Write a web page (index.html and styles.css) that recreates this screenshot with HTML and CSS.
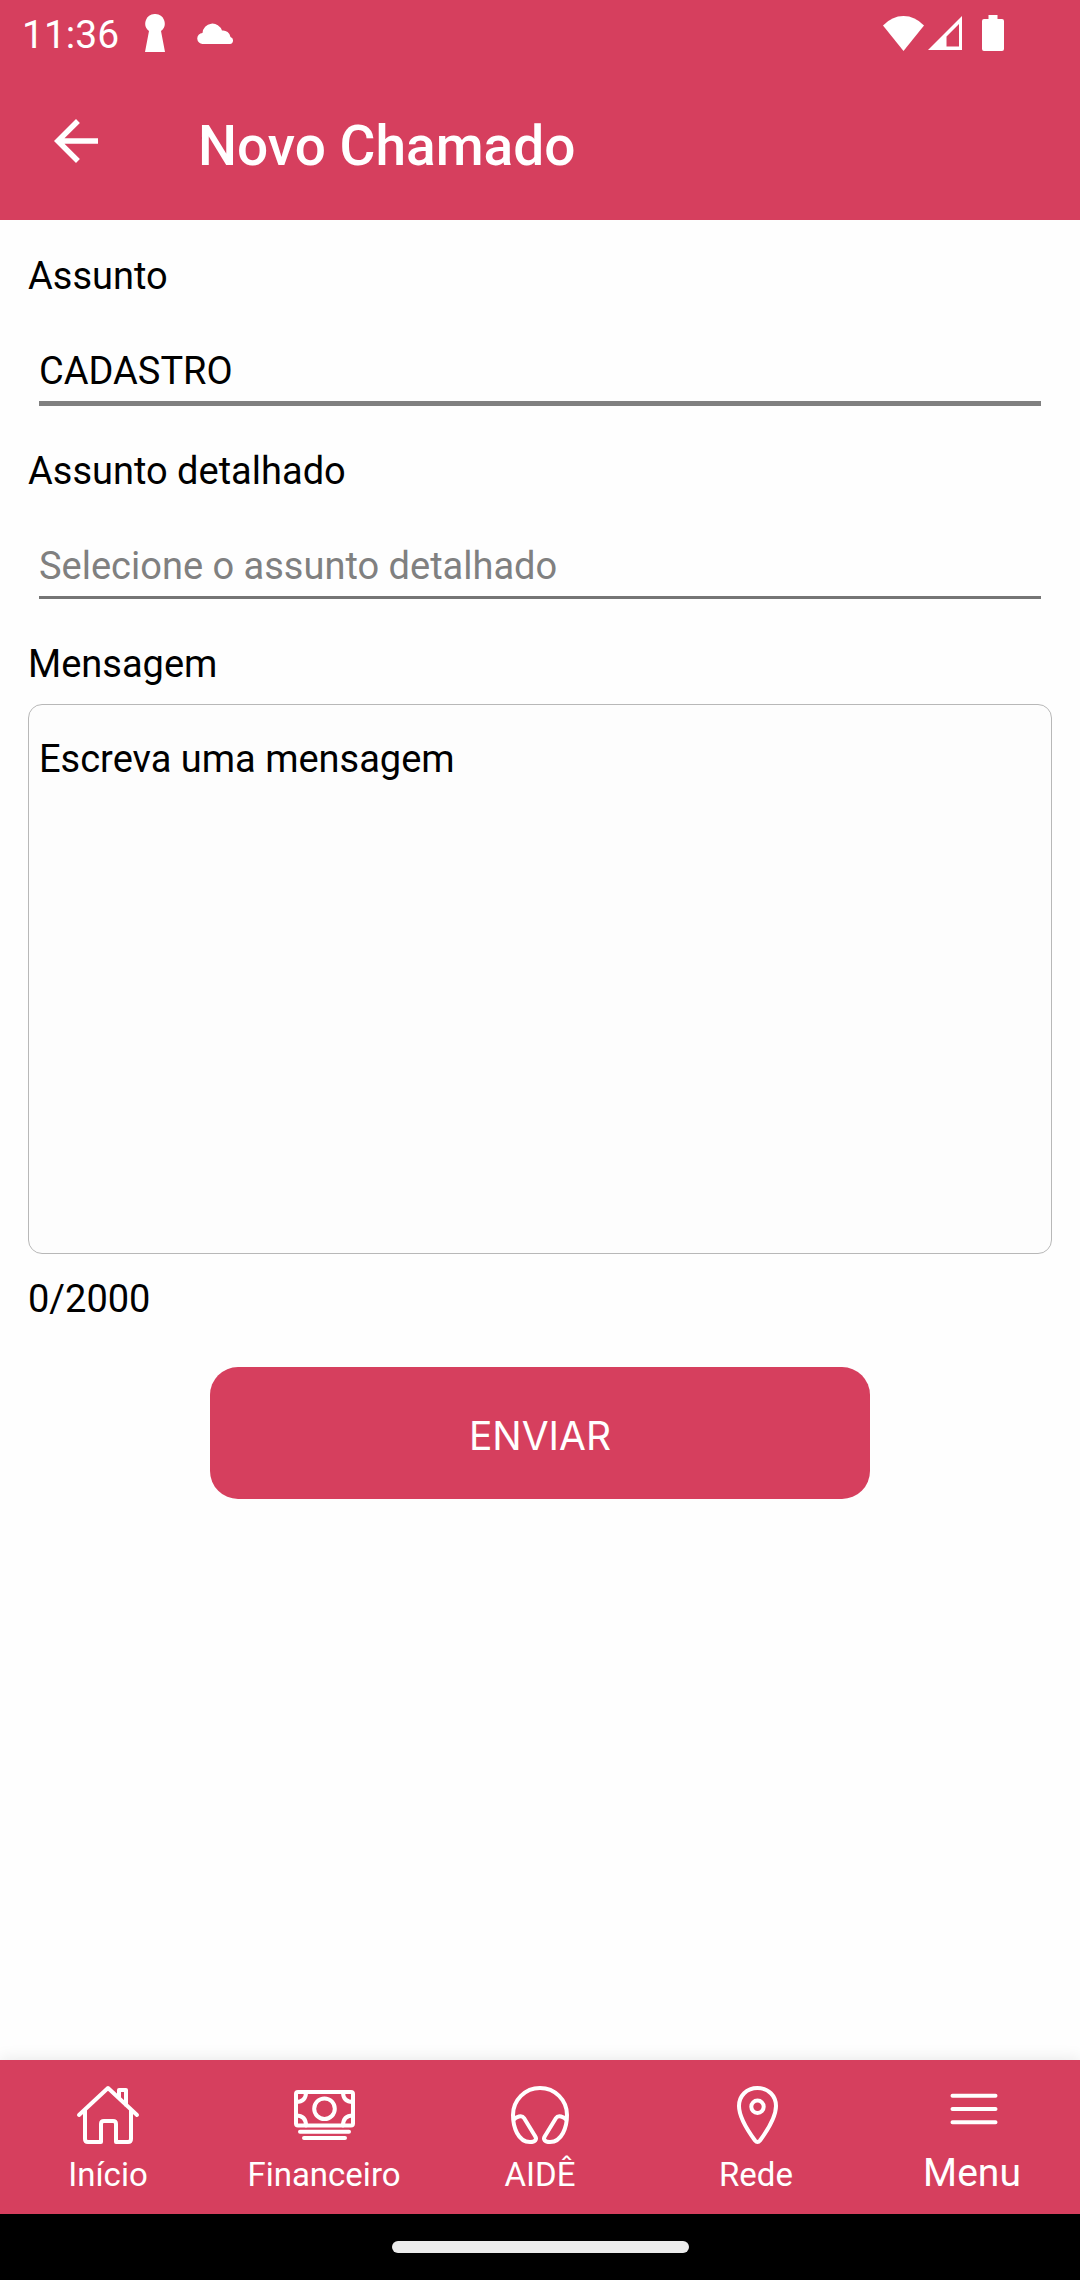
FILE: index.html
```html
<!DOCTYPE html>
<html lang="pt-BR">
<head>
    <meta charset="UTF-8">
    <meta name="viewport" content="width=device-width, initial-scale=1.0">
    <title>Novo Chamado</title>
    <link rel="stylesheet" href="styles.css">
</head>
<body>
    <header class="app-header">
        <div class="status-bar">
            <span class="status-time">11:36</span>
            <svg class="icon-keyhole" viewBox="0 0 20 38" width="20" height="38">
                <path d="M10 0a9.500 9.500 0 0 1 6 17l4 21H0l4-21a9.500 9.500 0 0 1 6-17z"/>
            </svg>
            <svg class="icon-cloud" viewBox="0 0 38 21" width="38" height="21">
                <path d="M6 21a5.500 5.500 0 0 1-.5-11A10 10 0 0 1 25 7.500a7.500 7.500 0 0 1 8.500 6.500a3.600 3.600 0 0 1-.5 7z"/>
            </svg>
            <div class="status-right">
                <svg viewBox="0 0 41 35" width="41" height="35">
                    <path d="M0 9.500Q9 0 20.500 0T41 9.500L20.500 35z"/>
                </svg>
                <svg viewBox="0 0 34 34" width="34" height="34">
                    <path fill-rule="evenodd" d="M34 0v34H0zM31 8L18.500 20.500V30.500H31z"/>
                </svg>
                <svg class="icon-battery" viewBox="0 0 22 36" width="22" height="36">
                    <path d="M6.500 0h9v4h4.500q2 0 2 2v28q0 2-2 2H2q-2 0-2-2V6q0-2 2-2h4.500z"/>
                </svg>
            </div>
        </div>
        <div class="toolbar">
            <button type="button" class="back-button" aria-label="Voltar">
                <svg viewBox="0 0 44 44" width="44" height="44">
                    <path d="M44 19.200H10.500L25.900 3.900 22 0 0 22l22 22 3.900-3.900L10.500 24.800H44z"/>
                </svg>
            </button>
            <h1 class="toolbar-title">Novo Chamado</h1>
        </div>
    </header>

    <main class="content">
        <form class="ticket-form">
            <label for="assunto">Assunto</label>
            <select id="assunto" class="picker picker-active">
                <option>CADASTRO</option>
            </select>

            <label for="assuntoDetalhado">Assunto detalhado</label>
            <select id="assuntoDetalhado" class="picker picker-empty">
                <option value="">Selecione o assunto detalhado</option>
            </select>

            <label for="mensagem">Mensagem</label>
            <textarea id="mensagem" class="message" maxlength="2000" placeholder="Escreva uma mensagem"></textarea>
            <output class="counter" for="mensagem">0/2000</output>

            <button type="button" class="submit-button">ENVIAR</button>
        </form>
    </main>

    <nav class="tab-bar">
        <a href="#" class="tab">
            <svg viewBox="0 0 64 60" width="64" height="60">
                <path d="M3 30L32 3l29 27M43 13V5h7v15M9 25v29q0 3 3 3h13V39q0-3 3-3h9q3 0 3 3v18h12q3 0 3-3V25"/>
            </svg>
            <span>Início</span>
        </a>
        <a href="#" class="tab">
            <svg viewBox="0 0 64 60" width="64" height="60">
                <rect x="4" y="7" width="57" height="33.500" rx="2"/>
                <circle cx="32.500" cy="23.700" r="10.300"/>
                <path d="M14 7q0 10-10 10M51 7q0 10 10 10M4 30.500q10 0 10 10M61 30.500q-10 0-10 10M8 46.700h49M12 53h41"/>
            </svg>
            <span>Financeiro</span>
        </a>
        <a href="#" class="tab">
            <svg viewBox="0 0 64 60" width="64" height="60">
                <path d="M5 30A27 27 0 0 1 59 30C59 42 54 57 42 57C37 57 34.500 54.500 37 51L48 33C50 30 56 31.500 58.500 35M5 30C5 42 10 57 22 57C27 57 29.500 54.500 27 51L16 33C14 30 8 31.500 5.500 35"/>
            </svg>
            <span>AIDÊ</span>
        </a>
        <a href="#" class="tab">
            <svg viewBox="0 0 64 60" width="64" height="60">
                <path d="M33.500 3c-11 0-18.500 8-18.500 18 0 12 9 25 16 34.500q2.500 3 5 0c7-9.500 16-22.500 16-34.500C52 11 44.500 3 33.500 3z"/>
                <circle cx="33.500" cy="21.700" r="6.200"/>
            </svg>
            <span>Rede</span>
        </a>
        <a href="#" class="tab tab-menu">
            <svg viewBox="0 0 64 60" width="64" height="60">
                <path d="M12.500 10.700h43M12.500 24h43M12.500 37.300h43"/>
            </svg>
            <span>Menu</span>
        </a>
    </nav>
    <div class="gesture-bar"><span class="gesture-handle"></span></div>
</body>
</html>
```
FILE: styles.css
```css
* {
    box-sizing: border-box;
}
body {
    margin: 0;
    min-height: 100vh;
    display: flex;
    flex-direction: column;
    font-family: Roboto, sans-serif;
    font-size: 38px;
    line-height: 46px;
    color: #000;
    background-color: #fefefe;
}
button, select, textarea {
    font: inherit;
    color: inherit;
}
svg {
    display: block;
}
.app-header {
    background-color: #d63f5e;
    color: #fff;
    fill: #fff;
}
.status-bar {
    display: flex;
    align-items: center;
    height: 66px;
    padding: 0 76px 0 22px;
}
.status-time {
    padding-top: 4px;
    font-size: 39px;
}
.icon-keyhole {
    margin-left: 26px;
}
.icon-cloud {
    margin-left: 32px;
}
.status-right {
    display: flex;
    align-items: center;
    gap: 4px;
    margin-left: auto;
}
.icon-battery {
    margin-left: 16px;
}
.toolbar {
    display: flex;
    align-items: center;
    height: 154px;
    padding: 0 54px 4px;
}
.back-button {
    padding: 0;
    border: none;
    background: none;
    fill: #fff;
    cursor: pointer;
}
.toolbar-title {
    margin: 0 0 0 100px;
    padding-top: 10px;
    font-size: 55px;
    line-height: 64px;
    font-weight: 500;
}
.content {
    flex: 1;
    padding: 33px 28px;
}
.ticket-form {
    display: flex;
    flex-direction: column;
}
.picker {
    appearance: none;
    margin: 24px 11px 42px;
    padding: 25px 0 7px;
    border: none;
    border-radius: 0;
    background: none;
    line-height: 46px;
    outline: none;
}
.picker-active {
    border-bottom: 5px solid #808080;
}
.picker-empty {
    border-bottom: 3px solid #757575;
    color: #808080;
}
.message {
    height: 550px;
    margin-top: 17px;
    padding: 31px 10px;
    border: 1px solid #b8b8b8;
    border-radius: 14px;
    background-color: #fdfdfd;
    resize: none;
}
.message::placeholder {
    color: #000;
}
.counter {
    margin-top: 22px;
}
.submit-button {
    align-self: center;
    width: 660px;
    max-width: 100%;
    height: 132px;
    margin-top: 45px;
    padding-top: 6px;
    border: none;
    border-radius: 28px;
    background-color: #d63f5e;
    color: #fff;
    font-family: Inter, sans-serif;
    font-size: 39px;
    cursor: pointer;
}
.tab-bar {
    display: flex;
    height: 154px;
    background-color: #d63f5e;
    box-shadow: 0 0 16px rgba(0, 0, 0, 0.1);
}
.tab {
    flex: 1;
    display: flex;
    flex-direction: column;
    align-items: center;
    padding-top: 25px;
    color: #fff;
    font-size: 33px;
    line-height: 46px;
    text-decoration: none;
}
.tab svg {
    margin-bottom: 7px;
    fill: none;
    stroke: #fff;
    stroke-width: 4px;
    stroke-linecap: round;
    stroke-linejoin: round;
}
.tab-menu {
    font-size: 39px;
    line-height: 42px;
}
.gesture-bar {
    display: flex;
    align-items: center;
    justify-content: center;
    height: 66px;
    background-color: #000;
}
.gesture-handle {
    width: 297px;
    height: 12px;
    border-radius: 6px;
    background-color: #ececec;
}
```
